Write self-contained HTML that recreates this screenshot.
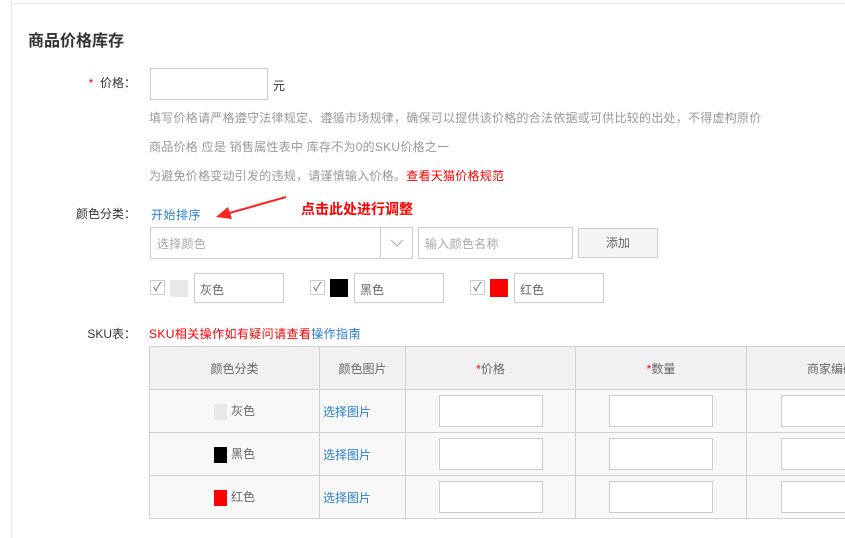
<!DOCTYPE html>
<html><head><meta charset="utf-8"><style>
*{margin:0;padding:0;box-sizing:border-box}
body{width:845px;height:538px;overflow:hidden;background:#fff;font-family:"Liberation Sans","Noto Sans CJK SC",sans-serif;font-size:12px;color:#333;position:relative}
.a{position:absolute;white-space:nowrap}
.box{position:absolute;border:1px solid #ccc;background:#fff}
.g{color:#999;letter-spacing:0.25px}
.b{color:#2a7ed9}
.r{color:#f00}
.lab{text-align:right;width:120px}
td{border:1px solid #d0d0d0;background:#f8f8f8;text-align:center;color:#666;font-size:12px}
th{border:1px solid #d0d0d0;background:#f1f1f1;font-weight:normal;color:#666;height:43px}
table{position:absolute;left:149px;top:346px;border-collapse:collapse;table-layout:fixed;width:717px}
td{height:43px}
.inp{display:inline-block;width:104px;height:32px;border:1px solid #ccc;background:#fff;vertical-align:middle}
.sw{display:inline-block;width:13px;height:16px;vertical-align:middle;margin-right:4px}
.cb{position:absolute;width:15px;height:15px;border:1px solid #ccc;background:#fff;color:#666;font-size:12px;line-height:13px;text-align:center}
</style></head><body>
<div class="a" style="left:11px;top:0;width:1px;height:538px;background:#e6e6e6"></div>
<div class="a" style="left:11px;top:3px;width:834px;height:1px;background:#e6e6e6"></div>
<div class="a" style="left:28px;top:27px;font-size:16px;font-weight:bold;color:#333">商品价格库存</div>

<div class="a lab" style="left:16px;top:74px"><span class="r">*</span>&nbsp; 价格：</div>
<div class="box" style="left:150px;top:68px;width:118px;height:32px"></div>
<div class="a" style="left:273px;top:77px">元</div>
<div class="a g" style="left:149px;top:109px">填写价格请严格遵守法律规定、遵循市场规律，确保可以提供该价格的合法依据或可供比较的出处，不得虚构原价</div>
<div class="a g" style="left:149px;top:138px">商品价格 应是 销售属性表中 库存不为0的SKU价格之一</div>
<div class="a g" style="left:149px;top:167px">为避免价格变动引发的违规，请谨慎输入价格。<span class="r">查看天猫价格规范</span></div>

<div class="a lab" style="left:16px;top:205px">颜色分类：</div>
<div class="a b" style="left:151px;top:206px;letter-spacing:0.5px">开始排序</div>
<svg class="a" style="left:212px;top:194px" width="80" height="30"><line x1="74" y1="3" x2="14" y2="20" stroke="#f22" stroke-width="2"/><polygon points="4,23 16,13 20,25" fill="#f22"/></svg>
<div class="a r" style="left:301px;top:199px;font-size:14px;font-weight:bold">点击此处进行调整</div>

<div class="box" style="left:150px;top:227px;width:263px;height:32px"></div>
<div class="a" style="left:380px;top:228px;width:1px;height:30px;background:#ccc"></div>
<svg class="a" style="left:389px;top:237px" width="16" height="12"><polyline points="2,3 8,9 14,3" fill="none" stroke="#aaa" stroke-width="1"/></svg>
<div class="a g" style="left:157px;top:235px;color:#aaa">选择颜色</div>
<div class="box" style="left:418px;top:227px;width:155px;height:32px"></div>
<div class="a" style="left:425px;top:235px;color:#aaa;letter-spacing:0.3px">输入颜色名称</div>
<div class="box" style="left:578px;top:228px;width:80px;height:30px;background:#f5f5f5;text-align:center;line-height:28px;color:#666">添加</div>

<div class="cb" style="left:150px;top:280px">✓</div><div class="a" style="left:170px;top:280px;width:18px;height:17px;background:#e8e8e8"></div>
<div class="box" style="left:194px;top:273px;width:90px;height:30px;padding:7px 5px;color:#666">灰色</div>
<div class="cb" style="left:310px;top:280px">✓</div><div class="a" style="left:330px;top:279px;width:18px;height:18px;background:#000"></div>
<div class="box" style="left:354px;top:273px;width:90px;height:30px;padding:7px 5px;color:#666">黑色</div>
<div class="cb" style="left:470px;top:280px">✓</div><div class="a" style="left:490px;top:279px;width:18px;height:18px;background:#f00"></div>
<div class="box" style="left:514px;top:273px;width:90px;height:30px;padding:7px 5px;color:#666">红色</div>

<div class="a lab" style="left:16px;top:325px">SKU表：</div>
<div class="a" style="left:149px;top:325px;letter-spacing:0.4px"><span class="r">SKU相关操作如有疑问请查看</span><span class="b">操作指南</span></div>

<table>
<colgroup><col style="width:170px"><col style="width:86px"><col style="width:170px"><col style="width:171px"><col style="width:120px"></colgroup>
<tr><th>颜色分类</th><th>颜色图片</th><th><span class="r">*</span>价格</th><th><span class="r">*</span>数量</th><th style="text-align:left;padding-left:60px">商家编码</th></tr>
<tr><td><span class="sw" style="background:#e8e8e8"></span>灰色</td><td style="text-align:left;padding-left:3px;color:#2a7ed9">选择图片</td><td><span class="inp"></span></td><td><span class="inp"></span></td><td style="text-align:left;padding-left:34px"><span class="inp"></span></td></tr>
<tr><td><span class="sw" style="background:#000"></span>黑色</td><td style="text-align:left;padding-left:3px;color:#2a7ed9">选择图片</td><td><span class="inp"></span></td><td><span class="inp"></span></td><td style="text-align:left;padding-left:34px"><span class="inp"></span></td></tr>
<tr><td><span class="sw" style="background:#f00"></span>红色</td><td style="text-align:left;padding-left:3px;color:#2a7ed9">选择图片</td><td><span class="inp"></span></td><td><span class="inp"></span></td><td style="text-align:left;padding-left:34px"><span class="inp"></span></td></tr>
</table>
</body></html>
